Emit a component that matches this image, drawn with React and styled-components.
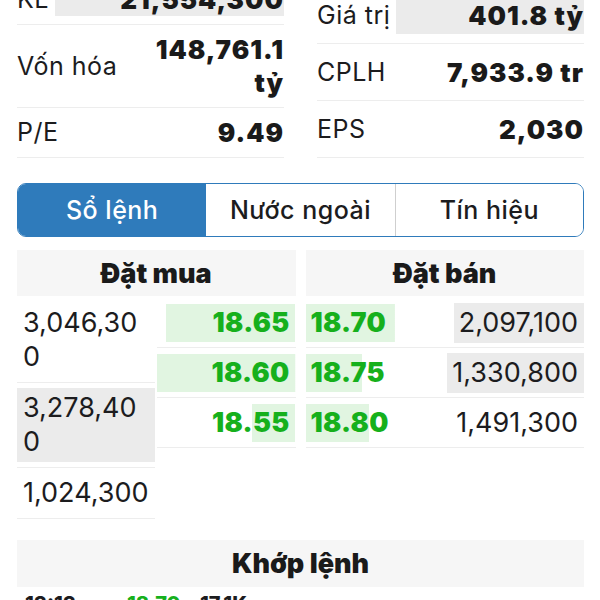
import React from "react";
import styled, { createGlobalStyle } from "styled-components";

const GlobalStyle = createGlobalStyle`
  body {
    margin: 0;
    background: #ffffff;
    font-family: "Inter", "Noto Sans", sans-serif;
    color: #1c1c1e;
  }
`;

const statsLeft = [
  { label: "KL", value: "21,554,300", flash: true },
  { label: "Vốn hóa", value: "148,761.1 tỷ" },
  { label: "P/E", value: "9.49" },
];

const statsRight = [
  { label: "Giá trị", value: "401.8 tỷ", flash: true },
  { label: "CPLH", value: "7,933.9 tr" },
  { label: "EPS", value: "2,030" },
];

const bids = [
  { price: "18.65", vol: 3046300 },
  { price: "18.60", vol: 3278400, flash: true },
  { price: "18.55", vol: 1024300 },
];

const asks = [
  { price: "18.70", vol: 2097100, flash: true },
  { price: "18.75", vol: 1330800, flash: true },
  { price: "18.80", vol: 1491300 },
];

const maxVol = Math.max(...bids.map((b) => b.vol), ...asks.map((a) => a.vol));
const fmt = (n) => n.toLocaleString("en-US");

function App() {
  return (
    <Page>
      <GlobalStyle />
      <Content>
        <Stats>
          <StatColumn>
            {statsLeft.map((s) => (
              <StatRow key={s.label} $pad={8}>
                <StatLabel>{s.label}</StatLabel>
                <StatValue $flash={s.flash} $pad={0}>
                  {s.value}
                </StatValue>
              </StatRow>
            ))}
          </StatColumn>
          <StatColumn>
            {statsRight.map((s) => (
              <StatRow key={s.label} $pad={9}>
                <StatLabel>{s.label}</StatLabel>
                <StatValue $flash={s.flash} $pad={2.5}>
                  {s.value}
                </StatValue>
              </StatRow>
            ))}
          </StatColumn>
        </Stats>

        <Tabs>
          <Tab $active>Sổ lệnh</Tab>
          <Tab>Nước ngoài</Tab>
          <Tab>Tín hiệu</Tab>
        </Tabs>

        <Book>
          <Side>
            <SideHeader>Đặt mua</SideHeader>
            <BuyBody>
              <Stack>
                {bids.map((b) => (
                  <VolRow key={b.price}>
                    <VolCell $flash={b.flash}>{fmt(b.vol)}</VolCell>
                  </VolRow>
                ))}
              </Stack>
              <Stack>
                {bids.map((b) => (
                  <PriceRow key={b.price}>
                    <PriceCell
                      $side="buy"
                      style={{ backgroundSize: `${(b.vol / maxVol) * 100}% 100%` }}
                    >
                      {b.price}
                    </PriceCell>
                  </PriceRow>
                ))}
              </Stack>
            </BuyBody>
          </Side>
          <Side>
            <SideHeader>Đặt bán</SideHeader>
            <SellBody>
              {asks.map((a) => (
                <SellRow key={a.price}>
                  <PriceCell
                    $side="sell"
                    style={{ backgroundSize: `${(a.vol / maxVol) * 100}% 100%` }}
                  >
                    {a.price}
                  </PriceCell>
                  <SellVol>
                    <VolTag $flash={a.flash}>{fmt(a.vol)}</VolTag>
                  </SellVol>
                </SellRow>
              ))}
            </SellBody>
          </Side>
        </Book>

        <MatchHeader>Khớp lệnh</MatchHeader>
        <TradeRow>
          <TradeTime>13:13</TradeTime>
          <TradePrice>18.70</TradePrice>
          <TradeVol>17.1K</TradeVol>
        </TradeRow>
      </Content>
    </Page>
  );
}
export default App;

const Page = styled.div`
  width: 600px;
  height: 600px;
  overflow: hidden;
`;

const Content = styled.div`
  padding: 0 16px 0 17px;
`;

const Stats = styled.section`
  display: grid;
  grid-template-columns: 1fr 1fr;
  column-gap: 33px;
  align-items: end;
  margin-top: -25px;
`;

const StatColumn = styled.div`
  display: flex;
  flex-direction: column;
`;

const StatRow = styled.div`
  display: flex;
  align-items: center;
  gap: 6px;
  padding: ${(p) => p.$pad}px 0;
  border-bottom: 1px solid #ededed;
  font-size: 25px;
  line-height: 33px;
`;

const StatLabel = styled.div`
  flex-shrink: 0;
  font-weight: 400;
  letter-spacing: 0.5px;
  color: #1c1c1e;
`;

const StatValue = styled.div`
  flex: 1;
  min-width: 0;
  text-align: right;
  font-size: 26px;
  font-weight: 900;
  letter-spacing: 1px;
  color: #1a1a1a;
  padding: ${(p) => p.$pad}px 0;
  background: ${(p) => (p.$flash ? "#ebebeb" : "transparent")};
`;

const Tabs = styled.nav`
  display: grid;
  grid-template-columns: repeat(3, 1fr);
  margin-top: 25px;
  height: 54px;
  box-sizing: border-box;
  border: 1.5px solid #2f7bbb;
  border-radius: 9px;
  overflow: hidden;
`;

const Tab = styled.div`
  display: flex;
  align-items: center;
  justify-content: center;
  font-size: 25px;
  font-weight: 500;
  letter-spacing: 0.5px;
  color: ${(p) => (p.$active ? "#ffffff" : "#1c1c1e")};
  background: ${(p) => (p.$active ? "#2f7bbb" : "#ffffff")};
  & + & {
    border-left: 1px solid #cfcfcf;
  }
  &:nth-child(2) {
    border-left: none;
  }
`;

const Book = styled.section`
  display: grid;
  grid-template-columns: 1fr 1fr;
  column-gap: 10px;
  margin-top: 13px;
  align-items: start;
`;

const Side = styled.div`
  display: flex;
  flex-direction: column;
`;

const SideHeader = styled.div`
  height: 46px;
  display: flex;
  align-items: center;
  justify-content: center;
  background: #f6f6f6;
  font-size: 27px;
  font-weight: 900;
  color: #1a1a1a;
  margin-bottom: 2px;
`;

const BuyBody = styled.div`
  display: grid;
  grid-template-columns: 1fr 1fr;
  column-gap: 2px;
  align-items: start;
`;

const Stack = styled.div`
  display: flex;
  flex-direction: column;
`;

const VolRow = styled.div`
  padding: 5px 0;
  border-bottom: 1px solid #ededed;
`;

const VolCell = styled.div`
  width: fit-content;
  max-width: 127px;
  padding: 3px 6px;
  font-size: 27px;
  line-height: 34px;
  word-break: break-all;
  background: ${(p) => (p.$flash ? "#ebebeb" : "transparent")};
`;

const PriceRow = styled.div`
  height: 50px;
  box-sizing: border-box;
  display: flex;
  align-items: center;
  border-bottom: 1px solid #ededed;
`;

const PriceCell = styled.div`
  width: 100%;
  height: 38px;
  line-height: 38px;
  box-sizing: border-box;
  font-size: 27px;
  font-weight: 900;
  letter-spacing: 0.3px;
  color: #16b01c;
  background-image: linear-gradient(#e1f5e1, #e1f5e1);
  background-repeat: no-repeat;
  background-position: ${(p) => (p.$side === "buy" ? "right" : "left")} center;
  text-align: ${(p) => (p.$side === "buy" ? "right" : "left")};
  padding: ${(p) => (p.$side === "buy" ? "0 6px 0 0" : "0 0 0 5px")};
`;

const SellBody = styled.div`
  display: flex;
  flex-direction: column;
`;

const SellRow = styled.div`
  display: grid;
  grid-template-columns: 1fr 1fr;
  align-items: center;
  height: 50px;
  box-sizing: border-box;
  border-bottom: 1px solid #ededed;
`;

const SellVol = styled.div`
  text-align: right;
  white-space: nowrap;
`;

const VolTag = styled.span`
  display: inline-block;
  padding: 3px 6px 3px 5px;
  font-size: 27px;
  line-height: 34px;
  background: ${(p) => (p.$flash ? "#ebebeb" : "transparent")};
`;

const MatchHeader = styled.div`
  margin-top: 21px;
  height: 47px;
  display: flex;
  align-items: center;
  justify-content: center;
  background: #f6f6f6;
  font-size: 27px;
  font-weight: 900;
  color: #1a1a1a;
`;

const TradeRow = styled.div`
  display: grid;
  grid-template-columns: 102px 73px 1fr;
  padding: 3px 0 0 8px;
  font-size: 20px;
  line-height: 28px;
  font-weight: 800;
`;

const TradeTime = styled.span`
  color: #1c1c1e;
`;

const TradePrice = styled.span`
  color: #16b01c;
`;

const TradeVol = styled.span`
  color: #1c1c1e;
`;
